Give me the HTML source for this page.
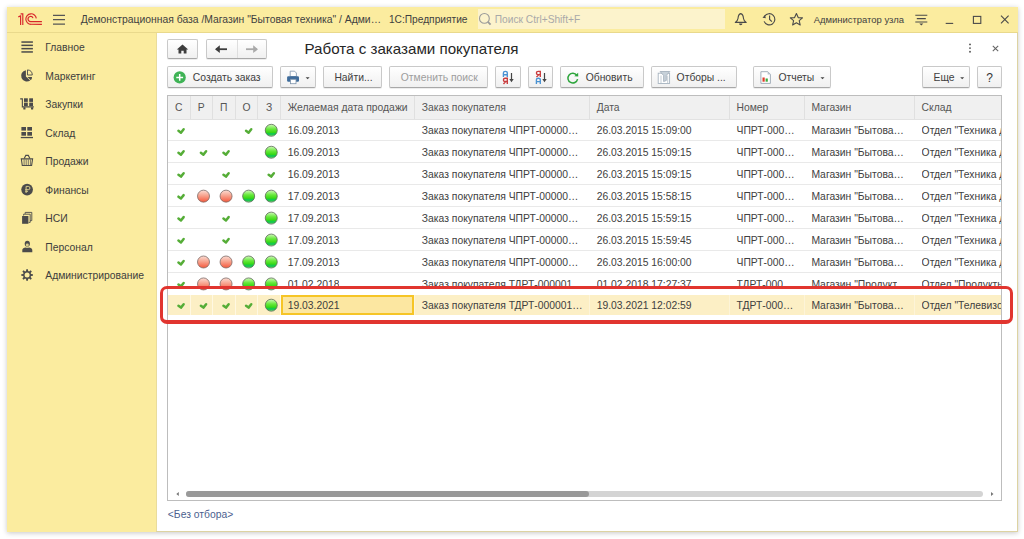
<!DOCTYPE html>
<html><head><meta charset="utf-8">
<style>
*{box-sizing:border-box;margin:0;padding:0}
html,body{width:1024px;height:539px;overflow:hidden;background:#fff;font-family:"Liberation Sans",sans-serif}
.a{position:absolute}
.t{position:absolute;white-space:nowrap}
.btn{position:absolute;border:1px solid #c9c9c9;border-bottom-color:#a8a8a8;border-radius:2px;background:linear-gradient(#ffffff,#f0f0f0);box-shadow:0 1px 0 rgba(0,0,0,.07)}
</style></head><body>
<div class="a" style="left:7px;top:7px;width:1011px;height:525px;background:#fff;box-shadow:0 1px 5px rgba(0,0,0,.22)"></div>
<div class="a" style="left:7px;top:7px;width:1011px;height:26px;background:#fbec9f"></div>
<div class="a" style="left:7px;top:32px;width:1011px;height:1px;background:#e9d98c"></div>
<div class="a" style="left:7px;top:33px;width:149px;height:499px;background:#fbec9f"></div>
<div class="a" style="left:156px;top:33px;width:1px;height:499px;background:#e9dc9c"></div>
<div class="a" style="left:1017px;top:33px;width:1px;height:499px;background:#ddd3a2"></div>
<div class="a" style="left:156px;top:531px;width:862px;height:1px;background:#ddd3a2"></div>
<svg class="a" style="left:0px;top:0px" width="1024" height="539" viewBox="0 0 1024 539"><g fill="none" stroke="#d8262b" stroke-width="1.15">
<path d="M18.3,16.9 L20.6,15.9 V24.9 M20.6,13.9 H22.8 V24.9"/>
<path d="M36.3,18.4 A5.25,5.25 0 1 0 31.1,24.3 H41.9"/>
<path d="M33.05,18.1 A2.6,2.6 0 1 0 30.6,21.6 H41.9"/>
</g></svg>
<svg class="a" style="left:0px;top:0px" width="1024" height="539" viewBox="0 0 1024 539"><g stroke="#555" stroke-width="1.3"><path d="M53,15.3H65M53,19.7H65M53,24.1H65"/></g></svg>
<div class="t" style="left:80.7px;top:13.02px;font-size:10.37px;line-height:14px;color:#3f3f3f;">Демонстрационная база /Магазин "Бытовая техника" / Адми…</div>
<div class="t" style="left:388.9px;top:13.02px;font-size:10.2px;line-height:14px;color:#3f3f3f;">1С:Предприятие</div>
<div class="a" style="left:477.7px;top:9.2px;width:247.3px;height:19.6px;background:#fcf3cc"></div>
<svg class="a" style="left:0px;top:0px" width="1024" height="539" viewBox="0 0 1024 539"><g fill="none" stroke="#9a9a9a" stroke-width="1.1"><circle cx="484.4" cy="18.4" r="4.9"/><path d="M487.9,21.9 L490.6,24.6" stroke-width="1.8"/></g></svg>
<div class="t" style="left:494.8px;top:13.02px;font-size:10.2px;line-height:14px;color:#a9a9a9;">Поиск Ctrl+Shift+F</div>
<svg class="a" style="left:0px;top:0px" width="1024" height="539" viewBox="0 0 1024 539"><g fill="none" stroke="#4a4a4a" stroke-width="1.1" stroke-linejoin="round">
<path d="M740.7,13.6 C738.3,14.2 738.2,16.5 738,18.5 C737.8,20.6 736.8,21.4 735.3,22.4 H746.2 C744.7,21.4 743.7,20.6 743.5,18.5 C743.3,16.5 743.2,14.2 740.7,13.6Z"/>
</g><path d="M739,23.6 H742.4 A1.7,1.7 0 0 1 739,23.6Z" fill="#4a4a4a"/></svg>
<svg class="a" style="left:0px;top:0px" width="1024" height="539" viewBox="0 0 1024 539"><g fill="none" stroke="#4a4a4a" stroke-width="1.15">
<path d="M764.6,16.2 A5.6,5.6 0 1 1 764.1,21.4"/>
<path d="M769.6,15.6 V19.4 L771.9,21.7"/>
</g><path d="M762.5,17.8 L765.9,18.3 L764.9,14.9Z" fill="#4a4a4a"/></svg>
<svg class="a" style="left:0px;top:0px" width="1024" height="539" viewBox="0 0 1024 539"><path d="M796.4,13.6 L798.2,17.6 L802.5,17.9 L799.2,20.7 L800.2,25 L796.4,22.7 L792.6,25 L793.6,20.7 L790.3,17.9 L794.6,17.6Z" fill="none" stroke="#4a4a4a" stroke-width="1.1" stroke-linejoin="round"/></svg>
<div class="t" style="left:813.7px;top:12.51px;font-size:9.45px;line-height:14px;color:#3f3f3f;">Администратор узла</div>
<svg class="a" style="left:0px;top:0px" width="1024" height="539" viewBox="0 0 1024 539"><g stroke="#4a4a4a" stroke-width="1.1"><path d="M915.3,15.2H927.3M916.8,18.6H925.8M915.3,22H927.3"/></g><path d="M919.3,23.4 H923.3 L921.3,25.6Z" fill="#4a4a4a"/></svg>
<svg class="a" style="left:0px;top:0px" width="1024" height="539" viewBox="0 0 1024 539"><g fill="none" stroke="#4a4a4a" stroke-width="1.1"><path d="M945.7,23.4H953.2"/><rect x="973.4" y="16.4" width="7.4" height="7"/><path d="M1001,15.6 L1008.6,23.3 M1008.6,15.6 L1001,23.3"/></g></svg>
<div class="t" style="left:45.3px;top:41.22px;font-size:10.35px;line-height:14px;color:#3d3d3d;">Главное</div>
<div class="t" style="left:45.3px;top:69.72px;font-size:10.35px;line-height:14px;color:#3d3d3d;">Маркетинг</div>
<div class="t" style="left:45.3px;top:98.22px;font-size:10.35px;line-height:14px;color:#3d3d3d;">Закупки</div>
<div class="t" style="left:45.3px;top:126.72px;font-size:10.35px;line-height:14px;color:#3d3d3d;">Склад</div>
<div class="t" style="left:45.3px;top:155.22px;font-size:10.35px;line-height:14px;color:#3d3d3d;">Продажи</div>
<div class="t" style="left:45.3px;top:183.72px;font-size:10.35px;line-height:14px;color:#3d3d3d;">Финансы</div>
<div class="t" style="left:45.3px;top:212.22px;font-size:10.35px;line-height:14px;color:#3d3d3d;">НСИ</div>
<div class="t" style="left:45.3px;top:240.72px;font-size:10.35px;line-height:14px;color:#3d3d3d;">Персонал</div>
<div class="t" style="left:45.3px;top:269.22px;font-size:10.35px;line-height:14px;color:#3d3d3d;">Администрирование</div>
<svg class="a" style="left:0px;top:0px" width="1024" height="539" viewBox="0 0 1024 539"><g fill="#4b4b4b">
<rect x="21.4" y="41.3" width="11.5" height="1.5"/><rect x="21.4" y="44.6" width="11.5" height="1.5"/><rect x="21.4" y="47.9" width="11.5" height="1.5"/><rect x="21.4" y="51.2" width="11.5" height="1.5"/>
</g><g transform="translate(-0.7,0)"><g fill="#4b4b4b">
<path d="M26.6,70.2 V76.4 L30.9,80.4 A5.7,5.7 0 1 1 26.6,70.2Z"/>
<path d="M28.1,76.9 H32.7 A5.4,5.4 0 0 1 31.6,80.3Z"/>
</g>
<path d="M28.2,69.9 A5.2,5.2 0 0 1 33,75 H28.2Z" fill="none" stroke="#4b4b4b" stroke-width="0.9"/></g>
<g fill="#4b4b4b">
<path d="M20.2,98.3 H22.9 V106.3 H33.8 V107.5 H21.8 V99.5 H20.2Z"/>
<rect x="24" y="98.3" width="3.8" height="3.6"/><rect x="29.2" y="98.3" width="3.8" height="3.6"/>
<rect x="24" y="102.6" width="3.8" height="3.4"/><rect x="29.2" y="102.6" width="3.8" height="3.4"/>
<rect x="23.3" y="107.2" width="2.2" height="2.4" rx="0.6"/><rect x="31" y="107.2" width="2.2" height="2.4" rx="0.6"/>
<rect x="21.4" y="127" width="4.6" height="3.6"/><rect x="27.3" y="127" width="4.7" height="3.6"/>
<rect x="21.4" y="132" width="4.6" height="3.7"/><rect x="27.3" y="132" width="4.7" height="3.7"/>
<rect x="20.8" y="136.9" width="12.2" height="1.3"/>
</g>
<g fill="none" stroke="#4b4b4b" stroke-width="1.1">
<path d="M24.2,158.4 L25.8,155.4 H28.3 L29.9,158.4"/>
<path d="M21.3,158.9 H32.6 L31.6,165.5 H22.3Z"/>
<path d="M24.1,159.5 V165 M26.2,159.5 V165 M28.3,159.5 V165 M30.4,159.5 V165" stroke-width="0.75"/>
</g>
<circle cx="27.1" cy="189.6" r="5.85" fill="#4b4b4b"/>
<path d="M26.1,193 V186.4 H28.3 A1.65,1.65 0 0 1 28.3,189.7 H25.2 M25.2,191.3 H28" fill="none" stroke="#d9ce8c" stroke-width="1.0"/>
<g fill="none" stroke="#4b4b4b" stroke-width="0.9">
<path d="M25.2,213.9 V212.4 H31.8 V220.6 H30.2"/>
<path d="M23.6,215.6 V214.2 H30.2 V222.4 H28.6"/>
</g>
<rect x="22.1" y="216" width="6.3" height="7.8" fill="#4b4b4b"/>
<g fill="#4b4b4b">
<ellipse cx="27.3" cy="243.7" rx="2.6" ry="2.9" fill="#4b4b4b"/>
<path d="M22.3,252.3 V249.9 C22.3,248.4 24,247.8 25.6,247.4 C26.2,248 28.4,248 29,247.4 C30.6,247.8 32.3,248.4 32.3,249.9 V252.3Z" fill="#4b4b4b"/>
</g>
<ellipse cx="27.3" cy="244.9" rx="1.55" ry="1.4" fill="#d8cc88"/>
<path d="M26.04,271.04 L26.28,269.16 L27.92,269.16 L28.16,271.04 L29.15,271.45 L30.65,270.29 L31.81,271.45 L30.65,272.95 L31.06,273.94 L32.94,274.18 L32.94,275.82 L31.06,276.06 L30.65,277.05 L31.81,278.55 L30.65,279.71 L29.15,278.55 L28.16,278.96 L27.92,280.84 L26.28,280.84 L26.04,278.96 L25.05,278.55 L23.55,279.71 L22.39,278.55 L23.55,277.05 L23.14,276.06 L21.26,275.82 L21.26,274.18 L23.14,273.94 L23.55,272.95 L22.39,271.45 L23.55,270.29 L25.05,271.45Z M29.6,275.0 A2.5,2.5 0 1 0 24.6,275.0 A2.5,2.5 0 1 0 29.6,275.0Z" fill="#4b4b4b" fill-rule="evenodd"/></svg>
<div class="btn" style="left:167px;top:39px;width:31px;height:20px"></div>
<div class="btn" style="left:205.5px;top:39px;width:61.5px;height:20px"></div>
<div class="a" style="left:236.5px;top:40px;width:1.0px;height:18px;background:#dedede"></div>
<svg class="a" style="left:0px;top:0px" width="1024" height="539" viewBox="0 0 1024 539"><path d="M182.5,44.4 L176.8,49.6 H178.5 V53.6 H181.3 V50.8 H183.7 V53.6 H186.5 V49.6 H188.2Z" fill="#3d3d3d"/></svg>
<svg class="a" style="left:0px;top:0px" width="1024" height="539" viewBox="0 0 1024 539"><g stroke="#3d3d3d" stroke-width="1.8" fill="none"><path d="M216,49.2 H227"/></g><path d="M215,49.2 L219.8,45.3 V53.1Z" fill="#3d3d3d"/></svg>
<svg class="a" style="left:0px;top:0px" width="1024" height="539" viewBox="0 0 1024 539"><g stroke="#a9a9a9" stroke-width="1.8" fill="none"><path d="M246,49.2 H257"/></g><path d="M258,49.2 L253.2,45.3 V53.1Z" fill="#a9a9a9"/></svg>
<div class="t" style="left:304.5px;top:42.27px;font-size:15.15px;line-height:14px;color:#262626;">Работа с заказами покупателя</div>
<svg class="a" style="left:0px;top:0px" width="1024" height="539" viewBox="0 0 1024 539"><g fill="#555"><circle cx="970" cy="44.4" r="0.95"/><circle cx="970" cy="48.1" r="0.95"/><circle cx="970" cy="51.8" r="0.95"/></g><path d="M992.8,45.8 L998.2,51.2 M998.2,45.8 L992.8,51.2" stroke="#666" stroke-width="1.1"/></svg>
<div class="btn" style="left:167px;top:66px;width:106px;height:22px"></div>
<div class="btn" style="left:280px;top:66px;width:36px;height:22px"></div>
<div class="btn" style="left:323px;top:66px;width:59px;height:22px"></div>
<div class="btn" style="left:389px;top:66px;width:99px;height:22px"></div>
<div class="btn" style="left:495px;top:66px;width:26px;height:22px"></div>
<div class="btn" style="left:528px;top:66px;width:25px;height:22px"></div>
<div class="btn" style="left:560px;top:66px;width:84px;height:22px"></div>
<div class="btn" style="left:651px;top:66px;width:86px;height:22px"></div>
<div class="btn" style="left:753px;top:66px;width:78px;height:22px"></div>
<div class="btn" style="left:922px;top:66px;width:48px;height:22px"></div>
<div class="btn" style="left:977px;top:66px;width:25px;height:22px"></div>
<svg class="a" style="left:0px;top:0px" width="1024" height="539" viewBox="0 0 1024 539"><circle cx="179.7" cy="77.4" r="6.1" fill="#3fb356"/><path d="M176.3,77.4 H183.1 M179.7,74 V80.8" stroke="#fff" stroke-width="1.5"/></svg>
<div class="t" style="left:192.8px;top:71.42px;font-size:10.35px;line-height:14px;color:#404040;">Создать заказ</div>
<svg class="a" style="left:0px;top:0px" width="1024" height="539" viewBox="0 0 1024 539"><path d="M290.2,71.2 H294.6 L296.4,73 V76.5 H290.2Z" fill="#fff" stroke="#7d93ab" stroke-width="0.8"/>
<rect x="287.1" y="76.2" width="11.9" height="5.5" rx="1.2" fill="#3f6c9b"/>
<rect x="290.4" y="79.3" width="5.6" height="4.4" fill="#fff" stroke="#7d93ab" stroke-width="0.8"/>
<path d="M305.6,77.2 H309.6 L307.6,79.2Z" fill="#444"/></svg>
<div class="t" style="left:334.4px;top:71.42px;font-size:10.35px;line-height:14px;color:#404040;">Найти...</div>
<div class="t" style="left:400.8px;top:71.42px;font-size:10.35px;line-height:14px;color:#9d9d9d;">Отменить поиск</div>
<svg class="a" style="left:0px;top:0px" width="1024" height="539" viewBox="0 0 1024 539"><path d="M503.4,77.1 V72.89999999999999 Q503.4,71.3 505.3,71.3 Q507.3,71.3 507.3,72.89999999999999 V77.1 M503.4,74.7 H507.3" fill="none" stroke="#4a92d2" stroke-width="1.35"/><path d="M507.3,84.0 V78.2 H505.2 Q503.4,78.2 503.4,79.9 Q503.4,81.5 505.2,81.5 H507.3 M505.6,81.60000000000001 L503.5,84.0" fill="none" stroke="#c93a3c" stroke-width="1.35"/><path d="M511.5,73 V80" stroke="#444" stroke-width="1.2"/><path d="M509.3,79 H513.7 L511.5,82.3Z" fill="#444"/><path d="M536.4,84.0 V79.8 Q536.4,78.2 538.3,78.2 Q540.3,78.2 540.3,79.8 V84.0 M536.4,81.60000000000001 H540.3" fill="none" stroke="#4a92d2" stroke-width="1.35"/><path d="M540.3,77.1 V71.3 H538.2 Q536.4,71.3 536.4,73.0 Q536.4,74.6 538.2,74.6 H540.3 M538.6,74.7 L536.5,77.1" fill="none" stroke="#c93a3c" stroke-width="1.35"/><path d="M544.5,73 V80" stroke="#444" stroke-width="1.2"/><path d="M542.3,79 H546.7 L544.5,82.3Z" fill="#444"/></svg>
<svg class="a" style="left:0px;top:0px" width="1024" height="539" viewBox="0 0 1024 539"><path d="M576.8,75.2 A4.9,4.9 0 1 0 577.6,79.2" fill="none" stroke="#2da53c" stroke-width="1.5"/><path d="M574.3,76.3 L578.1,72.7 L578.3,76.5Z" fill="#2da53c"/></svg>
<div class="t" style="left:585.7px;top:71.42px;font-size:10.35px;line-height:14px;color:#404040;">Обновить</div>
<svg class="a" style="left:0px;top:0px" width="1024" height="539" viewBox="0 0 1024 539"><rect x="658.2" y="73.2" width="11.4" height="10.3" fill="#fff" stroke="#a6b3bf" stroke-width="0.9"/>
<path d="M660.1,71.5 H669.8 L666.3,75.5 V80.5 L663.6,81.5 V75.5Z" fill="#c7d1d9" stroke="#9eabb7" stroke-width="0.8"/>
<path d="M661,75.5 V83 M667.7,75.5 V83" stroke="#b5c0ca" stroke-width="0.8"/></svg>
<div class="t" style="left:676.6px;top:71.42px;font-size:10.35px;line-height:14px;color:#404040;">Отборы ...</div>
<svg class="a" style="left:0px;top:0px" width="1024" height="539" viewBox="0 0 1024 539"><path d="M760.9,71.7 H767.8 L770.4,74.3 V83.4 H760.9Z" fill="#fff" stroke="#9aa6b2" stroke-width="0.9"/>
<path d="M767.6,71.8 V74.5 H770.3Z" fill="#b8c4cf"/>
<rect x="762.5" y="77.5" width="2.2" height="4.2" fill="#e33b2a"/><rect x="765.6" y="78.5" width="2.2" height="3.2" fill="#3caa3c"/></svg>
<div class="t" style="left:778.5px;top:71.42px;font-size:10.35px;line-height:14px;color:#404040;">Отчеты</div>
<svg class="a" style="left:0px;top:0px" width="1024" height="539" viewBox="0 0 1024 539"><path d="M820.5,77.2 H824.5 L822.5,79.2Z" fill="#444"/></svg>
<div class="t" style="left:933.5px;top:71.42px;font-size:10.35px;line-height:14px;color:#404040;">Еще</div>
<svg class="a" style="left:0px;top:0px" width="1024" height="539" viewBox="0 0 1024 539"><path d="M960.2,77.2 H964.2 L962.2,79.2Z" fill="#444"/></svg>
<div class="t" style="left:986.2px;top:71.24px;font-size:12px;line-height:14px;color:#333;">?</div>
<div class="a" style="left:167.0px;top:94.9px;width:835.2px;height:406.1px;border:1px solid #bdbdbd;background:#fff"></div>
<div class="a" style="left:168.0px;top:95.9px;width:833.2px;height:23.099999999999994px;background:#f0f0f0"></div>
<div class="a" style="left:168.0px;top:118.6px;width:833.2px;height:1.0px;background:#e2e2e2"></div>
<div class="a" style="left:189.7px;top:95.9px;width:1.0px;height:23.099999999999994px;background:#e0e0e0"></div>
<div class="a" style="left:211.9px;top:95.9px;width:1.0px;height:23.099999999999994px;background:#e0e0e0"></div>
<div class="a" style="left:234.8px;top:95.9px;width:1.0px;height:23.099999999999994px;background:#e0e0e0"></div>
<div class="a" style="left:257.1px;top:95.9px;width:1.0px;height:23.099999999999994px;background:#e0e0e0"></div>
<div class="a" style="left:280.0px;top:95.9px;width:1.0px;height:23.099999999999994px;background:#e0e0e0"></div>
<div class="a" style="left:414.1px;top:95.9px;width:1.0px;height:23.099999999999994px;background:#e0e0e0"></div>
<div class="a" style="left:589.0px;top:95.9px;width:1.0px;height:23.099999999999994px;background:#e0e0e0"></div>
<div class="a" style="left:728.8px;top:95.9px;width:1.0px;height:23.099999999999994px;background:#e0e0e0"></div>
<div class="a" style="left:803.7px;top:95.9px;width:1.0px;height:23.099999999999994px;background:#e0e0e0"></div>
<div class="a" style="left:913.9px;top:95.9px;width:1.0px;height:23.099999999999994px;background:#e0e0e0"></div>
<div class="t" style="left:167.5px;width:22.69999999999999px;text-align:center;top:101.22px;font-size:10.35px;line-height:14px;color:#555">С</div>
<div class="t" style="left:190.2px;width:22.200000000000017px;text-align:center;top:101.22px;font-size:10.35px;line-height:14px;color:#555">Р</div>
<div class="t" style="left:212.4px;width:22.900000000000006px;text-align:center;top:101.22px;font-size:10.35px;line-height:14px;color:#555">П</div>
<div class="t" style="left:235.3px;width:22.30000000000001px;text-align:center;top:101.22px;font-size:10.35px;line-height:14px;color:#555">О</div>
<div class="t" style="left:257.6px;width:22.899999999999977px;text-align:center;top:101.22px;font-size:10.35px;line-height:14px;color:#555">З</div>
<div class="t" style="left:287.7px;top:101.22px;font-size:10.35px;line-height:14px;color:#555;">Желаемая дата продажи</div>
<div class="t" style="left:421.8px;top:101.22px;font-size:10.35px;line-height:14px;color:#555;">Заказ покупателя</div>
<div class="t" style="left:596.7px;top:101.22px;font-size:10.35px;line-height:14px;color:#555;">Дата</div>
<div class="t" style="left:736.5px;top:101.22px;font-size:10.35px;line-height:14px;color:#555;">Номер</div>
<div class="t" style="left:811.4000000000001px;top:101.22px;font-size:10.35px;line-height:14px;color:#555;">Магазин</div>
<div class="t" style="left:921.6px;top:101.22px;font-size:10.35px;line-height:14px;color:#555;">Склад</div>
<div class="a" style="left:168.0px;top:140.25px;width:833.2px;height:1.0px;background:#e9e9e9"></div>
<div class="t" style="left:287.7px;top:124.22px;font-size:10.35px;line-height:14px;color:#404040;">16.09.2013</div>
<div class="t" style="left:421.8px;top:124.22px;font-size:10.35px;line-height:14px;color:#404040;">Заказ покупателя ЧПРТ-00000…</div>
<div class="t" style="left:596.7px;top:124.22px;font-size:10.35px;line-height:14px;color:#404040;">26.03.2015 15:09:00</div>
<div class="t" style="left:736.5px;top:124.22px;font-size:10.35px;line-height:14px;color:#404040;">ЧПРТ-000…</div>
<div class="t" style="left:811.4000000000001px;top:124.22px;font-size:10.35px;line-height:14px;color:#404040;">Магазин "Бытова…</div>
<div class="t" style="left:921.6px;top:124.22px;font-size:10.35px;line-height:14px;color:#404040;width:79.60px;overflow:hidden;">Отдел "Техника д</div>
<div class="a" style="left:168.0px;top:162.2px;width:833.2px;height:1.0px;background:#e9e9e9"></div>
<div class="t" style="left:287.7px;top:146.17px;font-size:10.35px;line-height:14px;color:#404040;">16.09.2013</div>
<div class="t" style="left:421.8px;top:146.17px;font-size:10.35px;line-height:14px;color:#404040;">Заказ покупателя ЧПРТ-00000…</div>
<div class="t" style="left:596.7px;top:146.17px;font-size:10.35px;line-height:14px;color:#404040;">26.03.2015 15:09:15</div>
<div class="t" style="left:736.5px;top:146.17px;font-size:10.35px;line-height:14px;color:#404040;">ЧПРТ-000…</div>
<div class="t" style="left:811.4000000000001px;top:146.17px;font-size:10.35px;line-height:14px;color:#404040;">Магазин "Бытова…</div>
<div class="t" style="left:921.6px;top:146.17px;font-size:10.35px;line-height:14px;color:#404040;width:79.60px;overflow:hidden;">Отдел "Техника д</div>
<div class="a" style="left:168.0px;top:184.15px;width:833.2px;height:1.0px;background:#e9e9e9"></div>
<div class="t" style="left:287.7px;top:168.12px;font-size:10.35px;line-height:14px;color:#404040;">16.09.2013</div>
<div class="t" style="left:421.8px;top:168.12px;font-size:10.35px;line-height:14px;color:#404040;">Заказ покупателя ЧПРТ-00000…</div>
<div class="t" style="left:596.7px;top:168.12px;font-size:10.35px;line-height:14px;color:#404040;">26.03.2015 15:09:15</div>
<div class="t" style="left:736.5px;top:168.12px;font-size:10.35px;line-height:14px;color:#404040;">ЧПРТ-000…</div>
<div class="t" style="left:811.4000000000001px;top:168.12px;font-size:10.35px;line-height:14px;color:#404040;">Магазин "Бытова…</div>
<div class="t" style="left:921.6px;top:168.12px;font-size:10.35px;line-height:14px;color:#404040;width:79.60px;overflow:hidden;">Отдел "Техника д</div>
<div class="a" style="left:168.0px;top:206.1px;width:833.2px;height:1.0px;background:#e9e9e9"></div>
<div class="t" style="left:287.7px;top:190.07px;font-size:10.35px;line-height:14px;color:#404040;">17.09.2013</div>
<div class="t" style="left:421.8px;top:190.07px;font-size:10.35px;line-height:14px;color:#404040;">Заказ покупателя ЧПРТ-00000…</div>
<div class="t" style="left:596.7px;top:190.07px;font-size:10.35px;line-height:14px;color:#404040;">26.03.2015 15:58:15</div>
<div class="t" style="left:736.5px;top:190.07px;font-size:10.35px;line-height:14px;color:#404040;">ЧПРТ-000…</div>
<div class="t" style="left:811.4000000000001px;top:190.07px;font-size:10.35px;line-height:14px;color:#404040;">Магазин "Бытова…</div>
<div class="t" style="left:921.6px;top:190.07px;font-size:10.35px;line-height:14px;color:#404040;width:79.60px;overflow:hidden;">Отдел "Техника д</div>
<div class="a" style="left:168.0px;top:228.04999999999998px;width:833.2px;height:1.0px;background:#e9e9e9"></div>
<div class="t" style="left:287.7px;top:212.02px;font-size:10.35px;line-height:14px;color:#404040;">17.09.2013</div>
<div class="t" style="left:421.8px;top:212.02px;font-size:10.35px;line-height:14px;color:#404040;">Заказ покупателя ЧПРТ-00000…</div>
<div class="t" style="left:596.7px;top:212.02px;font-size:10.35px;line-height:14px;color:#404040;">26.03.2015 15:59:15</div>
<div class="t" style="left:736.5px;top:212.02px;font-size:10.35px;line-height:14px;color:#404040;">ЧПРТ-000…</div>
<div class="t" style="left:811.4000000000001px;top:212.02px;font-size:10.35px;line-height:14px;color:#404040;">Магазин "Бытова…</div>
<div class="t" style="left:921.6px;top:212.02px;font-size:10.35px;line-height:14px;color:#404040;width:79.60px;overflow:hidden;">Отдел "Техника д</div>
<div class="a" style="left:168.0px;top:250.0px;width:833.2px;height:1.0px;background:#e9e9e9"></div>
<div class="t" style="left:287.7px;top:233.97px;font-size:10.35px;line-height:14px;color:#404040;">17.09.2013</div>
<div class="t" style="left:421.8px;top:233.97px;font-size:10.35px;line-height:14px;color:#404040;">Заказ покупателя ЧПРТ-00000…</div>
<div class="t" style="left:596.7px;top:233.97px;font-size:10.35px;line-height:14px;color:#404040;">26.03.2015 15:59:45</div>
<div class="t" style="left:736.5px;top:233.97px;font-size:10.35px;line-height:14px;color:#404040;">ЧПРТ-000…</div>
<div class="t" style="left:811.4000000000001px;top:233.97px;font-size:10.35px;line-height:14px;color:#404040;">Магазин "Бытова…</div>
<div class="t" style="left:921.6px;top:233.97px;font-size:10.35px;line-height:14px;color:#404040;width:79.60px;overflow:hidden;">Отдел "Техника д</div>
<div class="a" style="left:168.0px;top:271.95px;width:833.2px;height:1.0px;background:#e9e9e9"></div>
<div class="t" style="left:287.7px;top:255.92px;font-size:10.35px;line-height:14px;color:#404040;">17.09.2013</div>
<div class="t" style="left:421.8px;top:255.92px;font-size:10.35px;line-height:14px;color:#404040;">Заказ покупателя ЧПРТ-00000…</div>
<div class="t" style="left:596.7px;top:255.92px;font-size:10.35px;line-height:14px;color:#404040;">26.03.2015 16:00:00</div>
<div class="t" style="left:736.5px;top:255.92px;font-size:10.35px;line-height:14px;color:#404040;">ЧПРТ-000…</div>
<div class="t" style="left:811.4000000000001px;top:255.92px;font-size:10.35px;line-height:14px;color:#404040;">Магазин "Бытова…</div>
<div class="t" style="left:921.6px;top:255.92px;font-size:10.35px;line-height:14px;color:#404040;width:79.60px;overflow:hidden;">Отдел "Техника д</div>
<div class="t" style="left:287.7px;top:277.87px;font-size:10.35px;line-height:14px;color:#404040;height:11.63px;overflow:hidden;">01.02.2018</div>
<div class="t" style="left:421.8px;top:277.87px;font-size:10.35px;line-height:14px;color:#404040;height:11.63px;overflow:hidden;">Заказ покупателя ТДРТ-000001</div>
<div class="t" style="left:596.7px;top:277.87px;font-size:10.35px;line-height:14px;color:#404040;height:11.63px;overflow:hidden;">01.02.2018 17:27:37</div>
<div class="t" style="left:736.5px;top:277.87px;font-size:10.35px;line-height:14px;color:#404040;height:11.63px;overflow:hidden;">ТДРТ-000</div>
<div class="t" style="left:811.4000000000001px;top:277.87px;font-size:10.35px;line-height:14px;color:#404040;height:11.63px;overflow:hidden;">Магазин "Продукт</div>
<div class="t" style="left:921.6px;top:277.87px;font-size:10.35px;line-height:14px;color:#404040;width:79.60px;overflow:hidden;height:11.63px;overflow:hidden;">Отдел "Продукты</div>
<div class="a" style="left:168.0px;top:295.2px;width:833.2px;height:20.0px;background:#fcefc5"></div>
<div class="a" style="left:189.7px;top:295.2px;width:1.0px;height:20.0px;background:#fff8e2"></div>
<div class="a" style="left:211.9px;top:295.2px;width:1.0px;height:20.0px;background:#fff8e2"></div>
<div class="a" style="left:234.8px;top:295.2px;width:1.0px;height:20.0px;background:#fff8e2"></div>
<div class="a" style="left:257.1px;top:295.2px;width:1.0px;height:20.0px;background:#fff8e2"></div>
<div class="a" style="left:280.0px;top:295.2px;width:1.0px;height:20.0px;background:#fff8e2"></div>
<div class="a" style="left:414.1px;top:295.2px;width:1.0px;height:20.0px;background:#fdf4d8"></div>
<div class="a" style="left:589.0px;top:295.2px;width:1.0px;height:20.0px;background:#fdf4d8"></div>
<div class="a" style="left:728.8px;top:295.2px;width:1.0px;height:20.0px;background:#fdf4d8"></div>
<div class="a" style="left:803.7px;top:295.2px;width:1.0px;height:20.0px;background:#fdf4d8"></div>
<div class="a" style="left:913.9px;top:295.2px;width:1.0px;height:20.0px;background:#fdf4d8"></div>
<div class="a" style="left:280.7px;top:295.2px;width:133.40000000000003px;height:19.80000000000001px;background:#fce7a1;border:2px solid #f6c526"></div>
<div class="t" style="left:287.7px;top:299.12px;font-size:10.35px;line-height:14px;color:#404040;">19.03.2021</div>
<div class="t" style="left:421.8px;top:299.12px;font-size:10.35px;line-height:14px;color:#404040;">Заказ покупателя ТДРТ-000001…</div>
<div class="t" style="left:596.7px;top:299.12px;font-size:10.35px;line-height:14px;color:#404040;">19.03.2021 12:02:59</div>
<div class="t" style="left:736.5px;top:299.12px;font-size:10.35px;line-height:14px;color:#404040;">ТДРТ-000…</div>
<div class="t" style="left:811.4000000000001px;top:299.12px;font-size:10.35px;line-height:14px;color:#404040;">Магазин "Бытова…</div>
<div class="t" style="left:921.6px;top:299.12px;font-size:10.35px;line-height:14px;color:#404040;width:79.60px;overflow:hidden;">Отдел "Телевизо</div>
<svg class="a" style="left:0px;top:0px" width="1024" height="539" viewBox="0 0 1024 539"><defs>
<linearGradient id="gg" x1="0" y1="0" x2="0" y2="1"><stop offset="0" stop-color="#d2f9bd"/><stop offset="0.4" stop-color="#66e83a"/><stop offset="0.68" stop-color="#36d814"/><stop offset="0.75" stop-color="#12c94a"/><stop offset="0.88" stop-color="#20c850"/><stop offset="1" stop-color="#90e890"/></linearGradient>
<linearGradient id="rg" x1="0" y1="0" x2="0" y2="1"><stop offset="0" stop-color="#fbddd4"/><stop offset="0.45" stop-color="#f7a48f"/><stop offset="0.8" stop-color="#f6735a"/><stop offset="1" stop-color="#f05a3c"/></linearGradient>
</defs><path d="M178.45,130.80 L180.95,132.70 L183.65,129.30" fill="none" stroke="#55ad37" stroke-width="2.5" stroke-linejoin="round" stroke-linecap="round"/><path d="M246.05,130.80 L248.55,132.70 L251.25,129.30" fill="none" stroke="#55ad37" stroke-width="2.5" stroke-linejoin="round" stroke-linecap="round"/><circle cx="271.25" cy="130.30" r="6.0" fill="url(#gg)" stroke="#5d6b58" stroke-width="0.8"/><path d="M178.45,152.75 L180.95,154.65 L183.65,151.25" fill="none" stroke="#55ad37" stroke-width="2.5" stroke-linejoin="round" stroke-linecap="round"/><path d="M200.90,152.75 L203.40,154.65 L206.10,151.25" fill="none" stroke="#55ad37" stroke-width="2.5" stroke-linejoin="round" stroke-linecap="round"/><path d="M223.45,152.75 L225.95,154.65 L228.65,151.25" fill="none" stroke="#55ad37" stroke-width="2.5" stroke-linejoin="round" stroke-linecap="round"/><circle cx="271.25" cy="152.25" r="6.0" fill="url(#gg)" stroke="#5d6b58" stroke-width="0.8"/><path d="M178.45,174.70 L180.95,176.60 L183.65,173.20" fill="none" stroke="#55ad37" stroke-width="2.5" stroke-linejoin="round" stroke-linecap="round"/><path d="M223.45,174.70 L225.95,176.60 L228.65,173.20" fill="none" stroke="#55ad37" stroke-width="2.5" stroke-linejoin="round" stroke-linecap="round"/><path d="M268.65,174.70 L271.15,176.60 L273.85,173.20" fill="none" stroke="#55ad37" stroke-width="2.5" stroke-linejoin="round" stroke-linecap="round"/><path d="M178.45,196.65 L180.95,198.55 L183.65,195.15" fill="none" stroke="#55ad37" stroke-width="2.5" stroke-linejoin="round" stroke-linecap="round"/><circle cx="203.50" cy="196.15" r="6.0" fill="url(#rg)" stroke="#7d6a66" stroke-width="0.8"/><circle cx="226.05" cy="196.15" r="6.0" fill="url(#rg)" stroke="#7d6a66" stroke-width="0.8"/><circle cx="248.65" cy="196.15" r="6.0" fill="url(#gg)" stroke="#5d6b58" stroke-width="0.8"/><circle cx="271.25" cy="196.15" r="6.0" fill="url(#gg)" stroke="#5d6b58" stroke-width="0.8"/><path d="M178.45,218.60 L180.95,220.50 L183.65,217.10" fill="none" stroke="#55ad37" stroke-width="2.5" stroke-linejoin="round" stroke-linecap="round"/><path d="M223.45,218.60 L225.95,220.50 L228.65,217.10" fill="none" stroke="#55ad37" stroke-width="2.5" stroke-linejoin="round" stroke-linecap="round"/><circle cx="271.25" cy="218.10" r="6.0" fill="url(#gg)" stroke="#5d6b58" stroke-width="0.8"/><path d="M178.45,240.55 L180.95,242.45 L183.65,239.05" fill="none" stroke="#55ad37" stroke-width="2.5" stroke-linejoin="round" stroke-linecap="round"/><path d="M223.45,240.55 L225.95,242.45 L228.65,239.05" fill="none" stroke="#55ad37" stroke-width="2.5" stroke-linejoin="round" stroke-linecap="round"/><circle cx="271.25" cy="240.05" r="6.0" fill="url(#gg)" stroke="#5d6b58" stroke-width="0.8"/><path d="M178.45,262.50 L180.95,264.40 L183.65,261.00" fill="none" stroke="#55ad37" stroke-width="2.5" stroke-linejoin="round" stroke-linecap="round"/><circle cx="203.50" cy="262.00" r="6.0" fill="url(#rg)" stroke="#7d6a66" stroke-width="0.8"/><circle cx="226.05" cy="262.00" r="6.0" fill="url(#rg)" stroke="#7d6a66" stroke-width="0.8"/><circle cx="248.65" cy="262.00" r="6.0" fill="url(#gg)" stroke="#5d6b58" stroke-width="0.8"/><circle cx="271.25" cy="262.00" r="6.0" fill="url(#gg)" stroke="#5d6b58" stroke-width="0.8"/><path d="M178.45,284.45 L180.95,286.35 L183.65,282.95" fill="none" stroke="#55ad37" stroke-width="2.5" stroke-linejoin="round" stroke-linecap="round"/><circle cx="203.50" cy="283.95" r="6.0" fill="url(#rg)" stroke="#7d6a66" stroke-width="0.8"/><circle cx="226.05" cy="283.95" r="6.0" fill="url(#rg)" stroke="#7d6a66" stroke-width="0.8"/><circle cx="248.65" cy="283.95" r="6.0" fill="url(#gg)" stroke="#5d6b58" stroke-width="0.8"/><circle cx="271.25" cy="283.95" r="6.0" fill="url(#gg)" stroke="#5d6b58" stroke-width="0.8"/><path d="M178.45,305.70 L180.95,307.60 L183.65,304.20" fill="none" stroke="#55ad37" stroke-width="2.5" stroke-linejoin="round" stroke-linecap="round"/><path d="M200.90,305.70 L203.40,307.60 L206.10,304.20" fill="none" stroke="#55ad37" stroke-width="2.5" stroke-linejoin="round" stroke-linecap="round"/><path d="M223.45,305.70 L225.95,307.60 L228.65,304.20" fill="none" stroke="#55ad37" stroke-width="2.5" stroke-linejoin="round" stroke-linecap="round"/><path d="M246.05,305.70 L248.55,307.60 L251.25,304.20" fill="none" stroke="#55ad37" stroke-width="2.5" stroke-linejoin="round" stroke-linecap="round"/><circle cx="271.25" cy="305.20" r="6.0" fill="url(#gg)" stroke="#5d6b58" stroke-width="0.8"/></svg>
<div class="a" style="left:186.4px;top:490.8px;width:796.2px;height:6.099999999999966px;background:#d4d4d4;border-radius:3px"></div>
<div class="a" style="left:186.4px;top:490.8px;width:402.5px;height:6.099999999999966px;background:#999;border-radius:3px"></div>
<svg class="a" style="left:0px;top:0px" width="1024" height="539" viewBox="0 0 1024 539"><path d="M178.8,491.9 L176.3,494 L178.8,496Z M991,491.9 L993.5,494 L991,496Z" fill="#777"/></svg>
<div class="t" style="left:167.8px;top:507.92px;font-size:10.35px;line-height:14px;color:#4b5f8f;">&lt;Без отбора&gt;</div>
<div class="a" style="left:159.8px;top:286px;width:853.2px;height:37.80000000000001px;border:3.6px solid #e1352f;border-bottom-width:4.4px;border-radius:7px"></div>
</body></html>
